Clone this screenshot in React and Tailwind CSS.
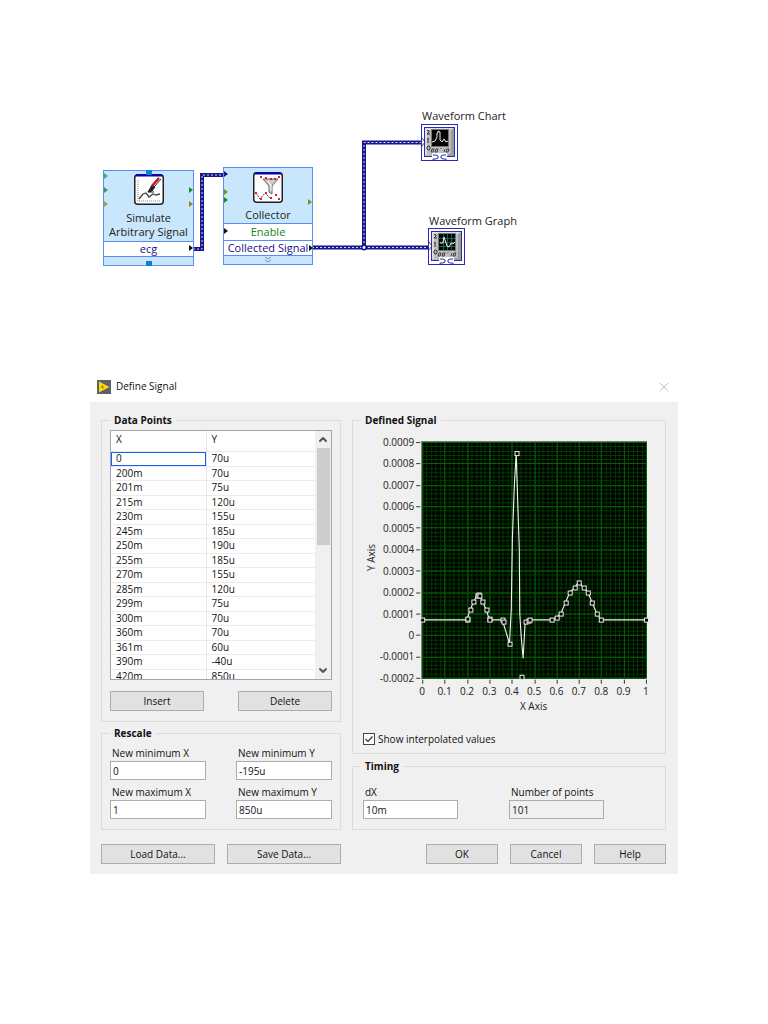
import React, { useState } from "react";
import { ChevronDown, ChevronUp, X } from "lucide-react";

const rows = [
  ["0", "70u"],
  ["200m", "70u"],
  ["201m", "75u"],
  ["215m", "120u"],
  ["230m", "155u"],
  ["245m", "185u"],
  ["250m", "190u"],
  ["255m", "185u"],
  ["270m", "155u"],
  ["285m", "120u"],
  ["299m", "75u"],
  ["300m", "70u"],
  ["360m", "70u"],
  ["361m", "60u"],
  ["390m", "-40u"],
  ["420m", "850u"],
];

// [x, y in microvolts]
const markers = [
  [0, 70], [0.2, 70], [0.201, 75], [0.215, 120], [0.23, 155], [0.245, 185],
  [0.25, 190], [0.255, 185], [0.27, 155], [0.285, 120], [0.299, 75], [0.3, 70],
  [0.36, 70], [0.361, 60], [0.39, -40], [0.42, 850], [0.443, -195],
  [0.46, 60], [0.475, 68], [0.481, 70], [0.58, 70], [0.6, 82], [0.62, 100],
  [0.64, 150], [0.66, 200], [0.68, 220], [0.7, 247], [0.72, 220], [0.74, 200],
  [0.76, 150], [0.78, 100], [0.8, 70], [1, 70],
];

// the interpolated peak is steeper than straight lines between the markers
const peak = [
  [0.398, 120], [0.403, 450], [0.412, 700], [0.42, 850], [0.427, 620],
  [0.434, 400], [0.436, 100], [0.442, 0], [0.451, -110],
];

const curve = [
  ...markers.filter(([x]) => x <= 0.39),
  ...peak,
  ...markers.filter(([x]) => x >= 0.46),
];

const PLOT = { left: 69, top: 14, width: 223, height: 235 };
const px = (x) => PLOT.left + x * PLOT.width;
const py = (y) => PLOT.top + ((900 - y) / 1100) * PLOT.height;
const crisp = (v) => Math.round(v) + 0.5;

const SignalGraph = ({ interpolated }) => {
  const yTicks = Array.from({ length: 12 }, (_, i) => 900 - i * 100);
  const xTicks = Array.from({ length: 11 }, (_, i) => i / 10);
  const minorX = Array.from({ length: 51 }, (_, i) => i / 50);
  const minorY = Array.from({ length: 56 }, (_, i) => 900 - i * 20);

  return (
    <svg viewBox="0 0 311 290" className="block w-full" role="img" aria-label="Defined Signal">
      <rect x="68.5" y="13.5" width="224" height="236" fill="#000" stroke="#777" />
      {minorX.map((v) => (
        <path key={v} d={`M${crisp(px(v))} 14V249`} stroke="#003a00" />
      ))}
      {minorY.map((v) => (
        <path key={v} d={`M69 ${crisp(py(v))}H292`} stroke="#003a00" />
      ))}
      {xTicks.map((v) => (
        <g key={v}>
          <path d={`M${crisp(px(v))} 14V249`} stroke="#006400" />
          <path d={`M${crisp(px(v))} 251v4`} stroke="#333" />
          <text x={px(v)} y="266" textAnchor="middle" className="fill-[#222] text-[10px]">
            {v}
          </text>
        </g>
      ))}
      {yTicks.map((v) => (
        <g key={v}>
          <path d={`M69 ${crisp(py(v))}H292`} stroke="#006400" />
          <path d={`M63 ${crisp(py(v))}h4`} stroke="#333" />
          <text x="61" y={py(v) + 4} textAnchor="end" className="fill-[#222] text-[10px]">
            {v === 0 ? "0" : (v / 1000000).toFixed(4)}
          </text>
        </g>
      ))}
      {interpolated && (
        <polyline
          points={curve.map(([x, y]) => `${px(x)},${py(y)}`).join(" ")}
          fill="none"
          stroke="#f4f4f4"
          strokeWidth="1.1"
        />
      )}
      {markers.map(([x, y]) => (
        <rect
          key={x}
          x={Math.round(px(x)) - 1.5}
          y={Math.round(py(y)) - 1.5}
          width="4"
          height="4"
          fill="#000"
          stroke="#eee"
        />
      ))}
      <text x="180" y="281" textAnchor="middle" className="fill-[#222] text-[10px]">
        X Axis
      </text>
      <text x="22" y="129" textAnchor="middle" transform="rotate(-90 22 129)" className="fill-[#222] text-[10px]">
        Y Axis
      </text>
    </svg>
  );
};

const Group = ({ title, className, children }) => (
  <fieldset className={`min-w-0 border border-[#dcdcdc] px-2 ${className}`}>
    <legend className="px-1 text-[10px] leading-4 font-bold">{title}</legend>
    {children}
  </fieldset>
);

const Field = ({ id, label, value, readOnly }) => (
  <div className="flex flex-col">
    <label htmlFor={id} className="pl-0.5 leading-4">
      {label}
    </label>
    <input
      id={id}
      defaultValue={value}
      readOnly={readOnly}
      className="h-[19px] w-full border border-[#adadad] bg-white px-0.5 read-only:bg-[#f0f0f0]"
    />
  </div>
);

const Button = ({ className, children }) => (
  <button type="button" className={`h-5 border border-[#adadad] bg-[#e1e1e1] text-center leading-4 ${className}`}>
    {children}
  </button>
);

const Port = ({ x, y, color }) => <path d={`M${x} ${y - 3}l4 3l-4 3z`} fill={color} />;

const Terminal = ({ graph }) => (
  <svg viewBox="0 0 37 37" className="block size-[37px]">
    <rect x="0.5" y="0.5" width="36" height="36" fill="#fff" stroke="#2b2bb5" />
    <rect x="3.5" y="3.5" width="30" height="29" fill="#bdbdbd" stroke="#2b2bb5" />
    <path d="M4 4H33L30 6H6V30L4 32z" fill="#dedede" />
    <path d="M33 4V32H27V30H30V6z" fill="#9c9c9c" />
    <rect x="10.5" y="5.5" width="17" height="17" fill="#050505" stroke="#777" />
    {graph && (
      <path d="M11 10.5h16M11 14.5h16M11 18.5h16M15.5 6v16M19.5 6v16M23.5 6v16" stroke="#17786c" strokeWidth="0.8" />
    )}
    <path
      d={graph ? "M12 15h3l1-6 2 6 1 3 2 1 2-4 2 1 2-2" : "M11 18l3-1 2-4V9h1V7l2 1v8l2 2 2-3 2 3 2-1"}
      fill="none"
      stroke="#eee"
    />
    <path
      d="M6 7l1-1 1 1v1l-2 2h3M6 15l1-1v5M7 22h1l1 1v2l-1 1H7l-1-1v-2z"
      fill="none"
      stroke="#222"
      strokeWidth="0.9"
    />
    <path d="M1 14l3 4-3 4" fill="none" stroke="#333" strokeWidth="0.9" />
    <path
      d="M11 25h2l-1 3h-2zM15 25h2l-1 3h-2zM20 24v1M24 25l-1 3M26 25h2l-1 3h-2z"
      fill="none"
      stroke="#333"
      strokeWidth="0.9"
    />
    <rect x="11" y="29" width="15" height="7" fill="#fff" />
    <path d="M12 31h3l2 1v2l-2 1h-3v1.500M25 31h-3l-2 1v2l2 1h3v1.500" fill="none" stroke="#2b2bb5" />
  </svg>
);

const BlockDiagram = () => (
  <section className="relative h-[170px] text-[11px] leading-[14px] text-[#222]">
    <svg viewBox="0 0 400 170" className="absolute top-0 left-0 h-[170px] w-[400px]">
      <g fill="none" stroke="#17178c" strokeWidth="4">
        <path d="M103 149H112V75H133M222 147.500H340M274 147V42.500H333" />
      </g>
      <g fill="none" stroke="#d4d4ff" strokeWidth="1" strokeDasharray="2 2">
        <path d="M103 149H112V75H133M222 147.500H340M274 147V42.500H333" />
      </g>
      <circle cx="274" cy="147.500" r="2.200" fill="#fff" stroke="#17178c" strokeWidth="1.500" />
    </svg>

    <div className="absolute top-[70px] left-[13px] flex h-24 w-[91px] flex-col border border-[#5b8cf0] bg-[#c9e7fc] text-center">
      <div className="flex flex-1 flex-col items-center pt-[3px]">
        <svg viewBox="0 0 30 31" className="mb-1.5 h-[31px] w-[30px]">
          <rect x="0.750" y="0.750" width="28.500" height="29.500" rx="3" fill="#fff" stroke="#222" strokeWidth="1.5" />
          <path d="M2 1.500H28" stroke="#0000d0" strokeWidth="2" />
          <path d="M4 6V27H27" fill="none" stroke="#888" strokeDasharray="1 1" />
          <path d="M5 25l4-5 3-1 3 4 4-3 3 1 4-1" fill="none" stroke="#444" strokeWidth="1.300" />
          <path d="M14 18l4-7 3 2-3 4-4 1h6" fill="#222" stroke="#222" />
          <path d="M18 12L25 4" stroke="#c01818" strokeWidth="2.500" />
          <path d="M20 13L27 5" stroke="#222" />
        </svg>
        <span>Simulate</span>
        <span>Arbitrary Signal</span>
      </div>
      <div className="h-4 border-y border-[#5b8cf0] bg-white leading-[14px] text-[#20108c]">ecg</div>
      <div className="h-2" />
      <svg viewBox="0 0 91 96" className="absolute -top-px -left-px h-24 w-[91px]">
        <path d="M43 0h6v5h-6zM43 91h6v5h-6z" fill="#0f80d0" />
        <Port x={1} y={6} color="#4fa878" />
        <Port x={1} y={20} color="#3d9a50" />
        <Port x={1} y={34} color="#a0a040" />
        <Port x={86} y={20} color="#148c28" />
        <Port x={86} y={34} color="#8c8c14" />
        <Port x={86} y={78} color="#111" />
      </svg>
    </div>

    <div className="absolute top-[67px] left-[133px] flex h-[98px] w-[90px] flex-col border border-[#5b8cf0] bg-[#c9e7fc] text-center">
      <div className="flex flex-1 flex-col items-center pt-1">
        <svg viewBox="0 0 30 31" className="mb-[5px] h-[31px] w-[30px]">
          <rect x="0.750" y="0.750" width="28.500" height="29.500" rx="3" fill="#fff" stroke="#222" strokeWidth="1.5" />
          <path d="M2 1.500H28" stroke="#0000d0" strokeWidth="2" />
          <path d="M10 7h15l-6 7v8l-3-2v-6z" fill="#ccc" stroke="#666" />
          <path d="M15 9l3 4v6" fill="none" stroke="#fff" />
          <path d="M3 21l4 6 5-6 5 5" fill="none" stroke="#333" strokeDasharray="2 1" />
          <path
            d="M7 4h2v2H7zM12 5h2v2h-2zM17 6h2v2h-2zM21 6h2v2h-2zM25 4h2v2h-2zM2 20h2v2H2zM7 26h2v2H7zM12 20h2v2h-2zM17 25h2v2h-2zM22 22h2v2h-2zM25 26h2v2h-2z"
            fill="#e02020"
          />
        </svg>
        <span>Collector</span>
      </div>
      <div className="h-[17px] border-t border-[#5b8cf0] bg-white leading-[15px] text-[#148414]">Enable</div>
      <div className="h-4 border-y border-[#5b8cf0] bg-white leading-[14px] whitespace-nowrap text-[#20108c]">
        Collected Signal
      </div>
      <div className="h-2" />
      <svg viewBox="0 0 90 98" className="absolute -top-px -left-px h-[98px] w-[90px]">
        <Port x={1} y={7} color="#17178c" />
        <Port x={1} y={25} color="#8c8c14" />
        <Port x={1} y={33} color="#148c28" />
        <Port x={85} y={35} color="#8c8c14" />
        <Port x={1} y={64} color="#111" />
        <Port x={86} y={81} color="#111" />
        <path d="M42 90l3 2 3-2M42 93l3 2 3-2" fill="none" stroke="#7b93ab" />
      </svg>
    </div>

    <div className="absolute top-[9px] left-[332px] whitespace-nowrap">Waveform Chart</div>
    <div className="absolute top-6 left-[331px]">
      <Terminal />
    </div>
    <div className="absolute top-[114px] left-[339px] whitespace-nowrap">Waveform Graph</div>
    <div className="absolute top-32 left-[338px]">
      <Terminal graph />
    </div>
  </section>
);

const App = () => {
  const [interpolated, setInterpolated] = useState(true);

  return (
    <main className="min-h-screen bg-white px-[90px] pt-[100px] pb-[150px] font-['Open_Sans','Noto_Sans',sans-serif] text-[10px] text-[#111]">
      <BlockDiagram />

      <div className="mt-[105px] bg-[#f0f0f0]">
        <header className="flex h-[27px] items-center bg-white pr-1.5 pb-1 pl-[7px]">
          <svg viewBox="0 0 14 14" className="mr-[5px] size-3.5">
            <rect width="14" height="14" fill="#5c6068" />
            <path d="M2 1.500L12.500 7L2 12.500z" fill="#ffd800" />
            <path d="M4 7h3M5.500 5.500v3" stroke="#a08000" />
          </svg>
          <h1 className="flex-1">Define Signal</h1>
          <button type="button" aria-label="Close">
            <X className="size-4 text-[#c4c4c4]" strokeWidth={1.5} />
          </button>
        </header>

        <div className="grid grid-cols-[240fr_314fr] gap-x-[11px] pt-2.5 pr-3 pb-2.5 pl-[11px]">
          <div className="flex flex-col gap-[3px]">
            <Group title="Data Points" className="pb-2.5">
              <div className="mt-0.5 flex h-[250px] overflow-hidden border border-[#a0a4ac] bg-white">
                <table className="flex-1 table-fixed border-collapse self-start">
                  <thead>
                    <tr className="h-5 border-b border-[#e8e8e8] text-left leading-[14px]">
                      <th className="w-[95px] border-r border-[#e8e8e8] p-0 pb-1 pl-[5px] font-normal">X</th>
                      <th className="p-0 pb-1 pl-[5px] font-normal">Y</th>
                    </tr>
                  </thead>
                  <tbody>
                    {rows.map(([x, y], i) => (
                      <tr key={x} className="border-b border-[#ececec] leading-[13px] odd:h-[15px] even:h-3.5">
                        <td
                          className={
                            i === 0
                              ? "border-r border-[#e8e8e8] p-0 pl-[5px] inset-ring inset-ring-blue-600"
                              : "border-r border-[#e8e8e8] p-0 pl-[5px]"
                          }
                        >
                          {x}
                        </td>
                        <td className="p-0 pl-[5px]">{y}</td>
                      </tr>
                    ))}
                  </tbody>
                </table>
                <div className="flex w-4 flex-col items-center bg-[#f0f0f0]">
                  <ChevronUp className="h-[17px] w-3" strokeWidth={4} color="#555" />
                  <div className="h-[97px] w-[13px] bg-[#cdcdcd]" />
                  <ChevronDown className="mt-auto h-[17px] w-3" strokeWidth={4} color="#555" />
                </div>
              </div>
              <div className="mt-[11px] flex justify-between">
                <Button className="w-[94px]">Insert</Button>
                <Button className="w-[94px]">Delete</Button>
              </div>
            </Group>

            <Group title="Rescale" className="pb-2.5">
              <div className="grid grid-cols-2 gap-x-[30px] gap-y-1 pt-1">
                <Field id="min-x" label="New minimum X" value="0" />
                <Field id="min-y" label="New minimum Y" value="-195u" />
                <Field id="max-x" label="New maximum X" value="1" />
                <Field id="max-y" label="New maximum Y" value="850u" />
              </div>
            </Group>
          </div>

          <div className="flex flex-col gap-1">
            <Group title="Defined Signal" className="flex-1">
              <div className="-mx-2">
                <SignalGraph interpolated={interpolated} />
              </div>
              <label className="mt-3 flex items-center gap-[3px] pl-0.5 leading-4">
                <span className="grid size-3">
                  <input
                    type="checkbox"
                    checked={interpolated}
                    onChange={(e) => setInterpolated(e.target.checked)}
                    className="peer col-start-1 row-start-1 size-3 appearance-none border border-[#444] bg-white"
                  />
                  <svg viewBox="0 0 12 12" className="pointer-events-none invisible col-start-1 row-start-1 size-3 peer-checked:visible">
                    <path d="M2.500 6l2.500 2.500L9.500 3.500" fill="none" stroke="#333" strokeWidth="1.2" />
                  </svg>
                </span>
                Show interpolated values
              </label>
            </Group>

            <Group title="Timing" className="pb-2.5">
              <div className="flex justify-between pt-2.5 pr-[53px] pl-0.5">
                <div className="w-[95px]">
                  <Field id="dx" label="dX" value="10m" />
                </div>
                <div className="w-[95px]">
                  <Field id="points" label="Number of points" value="101" readOnly />
                </div>
              </div>
            </Group>
          </div>

          <div className="mt-3.5 flex gap-3">
            <Button className="flex-1">Load Data...</Button>
            <Button className="flex-1">Save Data...</Button>
          </div>
          <div className="mt-3.5 flex justify-end gap-3">
            <Button className="w-[72px]">OK</Button>
            <Button className="w-[72px]">Cancel</Button>
            <Button className="w-[72px]">Help</Button>
          </div>
        </div>
      </div>
    </main>
  );
};

export default App;
